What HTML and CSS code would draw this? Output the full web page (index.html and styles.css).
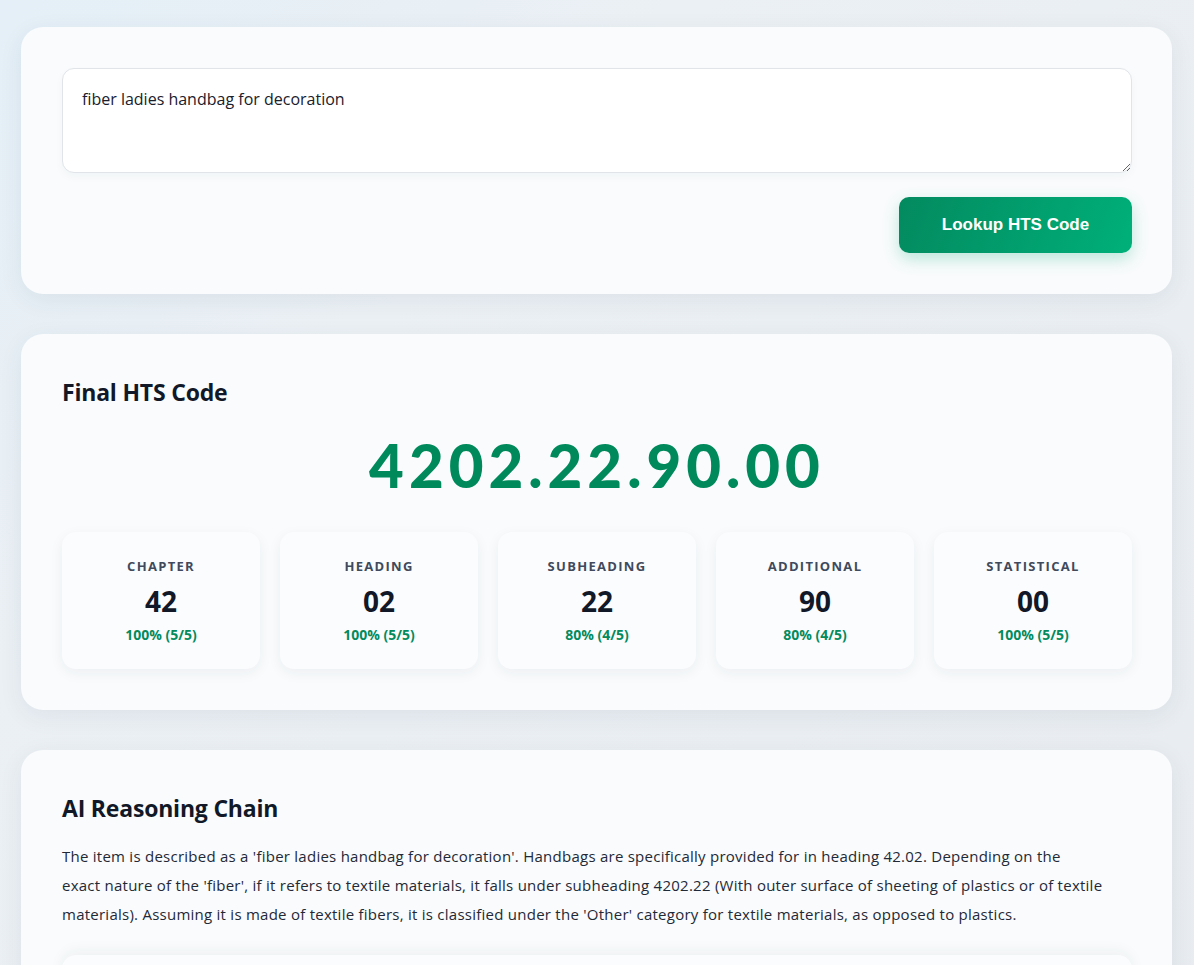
FILE: index.html
```html
<!DOCTYPE html>
<html>
<head>
  <meta charset="UTF-8">
  <meta name="viewport" content="width=device-width, initial-scale=1.0">
  <title>HTS Code Lookup</title>
  <link rel="stylesheet" href="styles.css">
</head>
<body>
  <div class="page">
    <section class="card">
      <textarea class="query" rows="3">fiber ladies handbag for decoration</textarea>
      <div class="actions">
        <button class="button">Lookup HTS Code</button>
      </div>
    </section>

    <section class="card">
      <h3 class="card-title">Final HTS Code</h3>
      <div class="final-code">4202.22.90.00</div>
      <div class="parts">
        <div class="part">
          <div class="part-label">Chapter</div>
          <div class="part-value">42</div>
          <div class="part-score">100% (5/5)</div>
        </div>
        <div class="part">
          <div class="part-label">Heading</div>
          <div class="part-value">02</div>
          <div class="part-score">100% (5/5)</div>
        </div>
        <div class="part">
          <div class="part-label">Subheading</div>
          <div class="part-value">22</div>
          <div class="part-score">80% (4/5)</div>
        </div>
        <div class="part">
          <div class="part-label">Additional</div>
          <div class="part-value">90</div>
          <div class="part-score">80% (4/5)</div>
        </div>
        <div class="part">
          <div class="part-label">Statistical</div>
          <div class="part-value">00</div>
          <div class="part-score">100% (5/5)</div>
        </div>
      </div>
    </section>

    <section class="card">
      <h3 class="card-title">AI Reasoning Chain</h3>
      <p class="reasoning">The item is described as a 'fiber ladies handbag for decoration'. Handbags are specifically provided for in heading 42.02. Depending on the<br>exact nature of the 'fiber', if it refers to textile materials, it falls under subheading 4202.22 (With outer surface of sheeting of plastics or of textile materials). Assuming it is made of textile fibers, it is classified under the 'Other' category for textile materials, as opposed to plastics.</p>
      <div class="steps"></div>
    </section>
  </div>
</body>
</html>
```

FILE: styles.css
```css
body {
  margin: 0;
  font-family: "Open Sans", "Noto Sans", sans-serif;
  color: #111827;
  background: linear-gradient(135deg, #e4eff7 0%, #ebf0f4 30%, #e8ecf0 100%);
  min-height: 965px;
}
.page {
  padding: 27px 22px 40px 21px;
  display: flex;
  flex-direction: column;
  gap: 40px;
}
.card {
  background: #f9fbfc;
  border-radius: 22px;
  padding: 41px 40px 41px 41px;
  box-shadow: 0 6px 24px rgba(30, 50, 80, 0.07);
}
.query {
  display: block;
  box-sizing: border-box;
  width: 100%;
  height: 105px;
  padding: 19px 19px;
  border: 1px solid #e1e4e8;
  border-radius: 12px;
  background: #fff;
  font-family: inherit;
  font-size: 16px;
  color: #1a202c;
  resize: vertical;
  outline: none;
  box-shadow: 0 4px 10px rgba(30, 50, 80, 0.03);
}
.actions {
  display: flex;
  justify-content: flex-end;
  margin-top: 24px;
}
.button {
  width: 233px;
  height: 56px;
  border: none;
  border-radius: 10px;
  background: linear-gradient(110deg, #038a5f 0%, #00b079 100%);
  color: white;
  font-family: "Liberation Sans", Arial, sans-serif;
  font-weight: bold;
  font-size: 17px;
  cursor: pointer;
  box-shadow: 0 6px 16px rgba(0, 176, 121, 0.25);
}
.card-title {
  margin: 0;
  font-size: 23px;
  font-weight: 700;
  color: #111827;
  line-height: 32px;
  padding-top: 1px;
  letter-spacing: -0.2px;
}
.final-code {
  margin: 22px 0 32px;
  text-align: center;
  font-family: "Lato", sans-serif;
  font-size: 60px;
  font-weight: 900;
  letter-spacing: 5px;
  color: #008a5c;
  line-height: 70px;
}
.parts {
  display: grid;
  grid-template-columns: repeat(5, 1fr);
  gap: 20px;
}
.part {
  background: #fbfcfe;
  border-radius: 14px;
  height: 137px;
  box-sizing: border-box;
  padding-top: 26px;
  text-align: center;
  box-shadow: 0 4px 14px rgba(30, 50, 80, 0.06);
}
.part-label {
  font-size: 13px;
  font-weight: 700;
  letter-spacing: 1.3px;
  text-transform: uppercase;
  color: #3f4a5c;
  line-height: 16px;
}
.part-value {
  margin-top: 9px;
  font-size: 28px;
  font-weight: 700;
  color: #111827;
  line-height: 36px;
}
.part-score {
  margin-top: 7px;
  font-size: 14px;
  font-weight: 700;
  color: #058a5c;
  line-height: 18px;
}
.reasoning {
  margin: 18px 0 26px;
  font-size: 15px;
  letter-spacing: 0.25px;
  line-height: 29px;
  color: #1f2937;
}
.steps {
  height: 90px;
  background: #fbfcfe;
  border-radius: 14px;
  box-shadow: 0 -4px 14px rgba(30, 50, 80, 0.05);
}
```
